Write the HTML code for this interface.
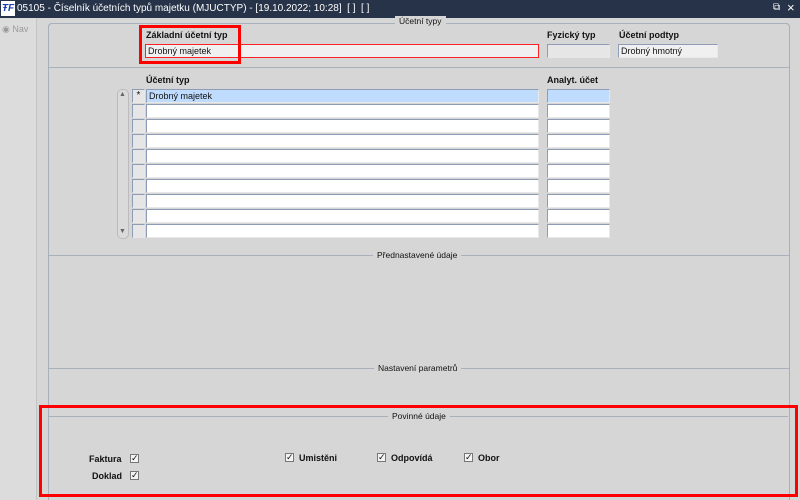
<!DOCTYPE html>
<html style="overflow:hidden;width:800px;height:500px"><head><meta charset="utf-8"><style>
*{box-sizing:border-box;margin:0;padding:0}
body{width:800px;height:500px;background:#d6d6d6;font-family:"Liberation Sans",sans-serif;font-size:9px;color:#111;position:relative;overflow:hidden}
.a{position:absolute}
.tb{left:0;top:0;width:800px;height:18px;background:#263348;color:#fff;font-size:10px;line-height:17px;padding-left:17px}
.hl{height:1px;background:#a8b0bc}
.lbl{font-weight:bold;font-size:9px}
.fld{height:14px;border:1px solid #8e9db5;border-right-color:#e8e8e8;border-bottom-color:#e8e8e8;background:#fff;line-height:12px;padding-left:2px}
.sec{background:#d6d6d6;padding:0 4px;font-size:8.5px;line-height:10px}
.cb{width:9px;height:9px;border:1px solid #777;background:#f4f4f4;font-size:9px;line-height:7px;text-align:center}
.red{border:3px solid #f00}
</style></head><body>
<div class="a tb">05105 - Číselník účetních typů majetku (MJUCTYP) - [19.10.2022; 10:28] &nbsp;[ ] &nbsp;[ ]</div>
<div class="a" style="left:1px;top:1px;width:14px;height:15px;background:#fff;color:#1a3fb0;font-weight:bold;font-style:italic;font-size:10px;line-height:15px;text-align:center">ŦF</div>
<div class="a" style="left:773px;top:2px;color:#fff;font-size:10px">⧉</div>
<div class="a" style="left:787px;top:0;color:#fff;font-size:13px">×</div>
<div class="a" style="left:0;top:18px;width:37px;height:482px;background:#dcdcdc;border-right:1px solid #c4c4c4"></div>
<div class="a" style="left:2px;top:24px;color:#999;font-size:9px">◉ Nav</div>
<div class="a" style="left:48px;top:23px;width:742px;height:485px;border:1px solid #a8b0bc;border-radius:4px"></div>
<div class="a" style="left:48px;top:23px;width:742px;height:45px;border:1px solid #a8b0bc;border-radius:4px 4px 0 0"></div>
<div class="a sec" style="left:395px;top:16px">Účetní typy</div>
<div class="a lbl" style="left:146px;top:30px">Základní účetní typ</div>
<div class="a fld" style="left:145px;top:44px;width:394px;background:#f0f0f0;border:1px solid #f22">Drobný majetek</div>
<div class="a lbl" style="left:547px;top:30px">Fyzický typ</div>
<div class="a fld" style="left:547px;top:44px;width:63px;background:#e6e6e6"></div>
<div class="a lbl" style="left:619px;top:30px">Účetní podtyp</div>
<div class="a fld" style="left:618px;top:44px;width:100px;background:#f0f0f0">Drobný hmotný</div>
<div class="a red" style="left:139px;top:25px;width:102px;height:39px"></div>
<div class="a lbl" style="left:146px;top:75px">Účetní typ</div>
<div class="a lbl" style="left:547px;top:75px">Analyt. účet</div>
<div class="a" style="left:117px;top:89px;width:12px;height:150px;background:#dadada;border:1px solid #bbb;border-radius:5px"></div>
<div class="a" style="left:119px;top:91px;font-size:7px;color:#666">▲</div>
<div class="a" style="left:119px;top:228px;font-size:7px;color:#666">▼</div>
<div id="rows"></div>
<div class="a hl" style="left:48px;top:255px;width:742px"></div>
<div class="a sec" style="left:373px;top:250px">Přednastavené údaje</div>
<div class="a hl" style="left:48px;top:368px;width:742px"></div>
<div class="a sec" style="left:374px;top:363px">Nastavení parametrů</div>
<div class="a hl" style="left:48px;top:416px;width:740px"></div>
<div class="a sec" style="left:388px;top:411px">Povinné údaje</div>
<div class="a lbl" style="left:89px;top:454px">Faktura</div>
<div class="a cb" style="left:130px;top:454px">✓</div>
<div class="a lbl" style="left:92px;top:471px">Doklad</div>
<div class="a cb" style="left:130px;top:471px">✓</div>
<div class="a cb" style="left:285px;top:453px">✓</div><div class="a lbl" style="left:299px;top:453px">Umistěni</div>
<div class="a cb" style="left:377px;top:453px">✓</div><div class="a lbl" style="left:391px;top:453px">Odpovídá</div>
<div class="a cb" style="left:464px;top:453px">✓</div><div class="a lbl" style="left:478px;top:453px">Obor</div>
<div class="a red" style="left:39px;top:405px;width:759px;height:92px"></div>
<script>
var h='';for(var i=0;i<10;i++){var y=89+i*15;var bg=i==0?'#bfdcff':'#fff';
h+='<div class="a fld" style="left:132px;top:'+y+'px;width:13px;background:#e6e6e6;'+(i==0?'text-align:center;padding:0;font-size:10px':'')+'">'+(i==0?'*':'')+'</div>';
h+='<div class="a fld" style="left:146px;top:'+y+'px;width:393px;background:'+bg+'">'+(i==0?'Drobný majetek':'')+'</div>';
h+='<div class="a fld" style="left:547px;top:'+y+'px;width:63px;background:'+bg+'"></div>';}
document.getElementById('rows').innerHTML=h;
</script>
</body></html>
